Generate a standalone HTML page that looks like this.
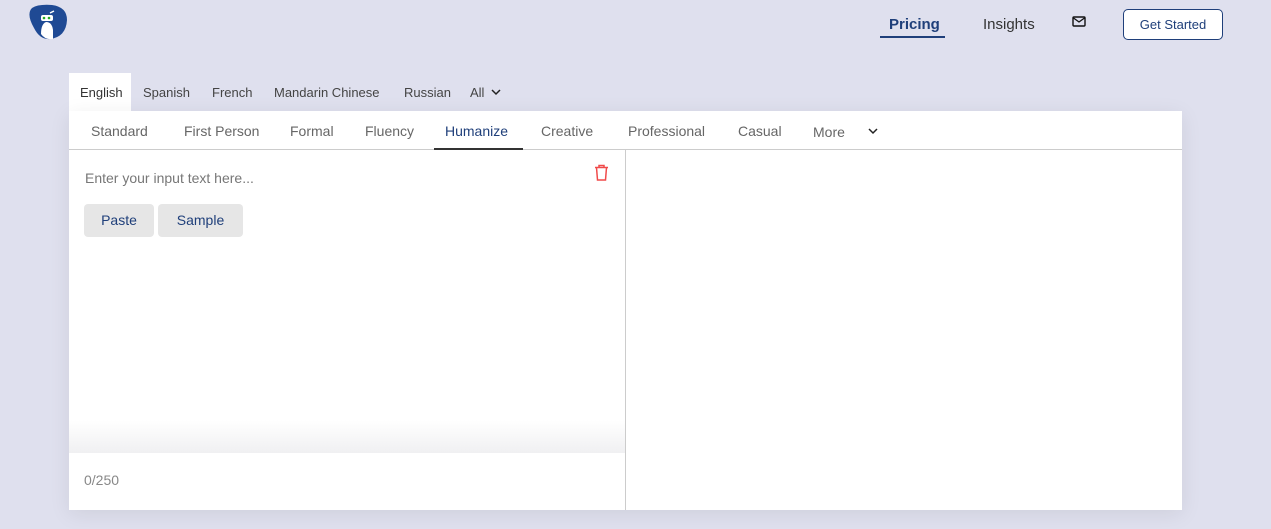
<!DOCTYPE html>
<html><head><style>
*{margin:0;padding:0;box-sizing:border-box}
body{width:1271px;height:529px;background:#dfe0ee;font-family:"Liberation Sans",sans-serif;position:relative;overflow:hidden}
.a{position:absolute;white-space:nowrap}
</style></head><body>
<svg class="a" style="left:28px;top:4px" width="40" height="36" viewBox="0 0 40 36"><path d="M4 4 Q10 0 24 1 Q39 3 39 16 Q38 33 22 35 Q12 36 6 24 Q-2 10 4 4Z" fill="#1f4a94"/><path d="M13 30 Q13 20 18 18 Q24 18 25 26 L25 35 Q17 36 13 30Z" fill="#fff"/><rect x="13" y="11" width="12" height="6" rx="2" fill="#fff"/><circle cx="16" cy="14" r="1.3" fill="#2a2"/><circle cx="21" cy="14" r="1.3" fill="#2a2"/><path d="M22 9 l4 -2" stroke="#fff" stroke-width="1.5"/></svg>
<div class="a" style="left:889px;top:16px;font-size:15px;font-weight:bold;color:#1f3f7a">Pricing</div>
<div class="a" style="left:880px;top:36px;width:65px;height:1.5px;background:#1f3f7a"></div>
<div class="a" style="left:983px;top:16px;font-size:15px;color:#333">Insights</div>
<svg class="a" style="left:1072px;top:16px" width="14" height="11" viewBox="0 0 14 11"><rect x="1" y="1" width="12" height="9" rx="1" fill="none" stroke="#111" stroke-width="1.4"/><path d="M1.5 2 L7 6 L12.5 2" fill="none" stroke="#111" stroke-width="1.3"/></svg>
<div class="a" style="left:1123px;top:9px;width:100px;height:31px;border:1px solid #1f3f7a;border-radius:5px;background:#fff;font-size:13px;color:#1f3f7a;text-align:center;line-height:29px">Get Started</div>
<div class="a" style="left:69px;top:73px;width:62px;height:38px;background:#fff"></div>
<div class="a" style="top:85px;font-size:13px;color:#333;left:80px">English</div>
<div class="a" style="top:85px;font-size:13px;color:#444;left:143px">Spanish</div>
<div class="a" style="top:85px;font-size:13px;color:#444;left:212px">French</div>
<div class="a" style="top:85px;font-size:13px;color:#444;left:274px">Mandarin Chinese</div>
<div class="a" style="top:85px;font-size:13px;color:#444;left:404px">Russian</div>
<div class="a" style="top:85px;font-size:13px;color:#444;left:470px">All</div>
<svg class="a" style="left:491px;top:89px" width="10" height="7"><path d="M1 1 L5 5 L9 1" fill="none" stroke="#222" stroke-width="1.5"/></svg>
<div class="a" style="left:69px;top:111px;width:1113px;height:399px;background:#fff;box-shadow:0 4px 20px rgba(0,0,0,.08)"></div>
<div class="a" style="left:69px;top:149px;width:1113px;height:1px;background:#ccc"></div>
<div class="a" style="top:123px;font-size:14px;color:#666;left:91px">Standard</div>
<div class="a" style="top:123px;font-size:14px;color:#666;left:184px">First Person</div>
<div class="a" style="top:123px;font-size:14px;color:#666;left:290px">Formal</div>
<div class="a" style="top:123px;font-size:14px;color:#666;left:365px">Fluency</div>
<div class="a" style="top:123px;font-size:14px;color:#1f3f7a;left:445px">Humanize</div>
<div class="a" style="left:434px;top:148px;width:89px;height:2px;background:#333"></div>
<div class="a" style="top:123px;font-size:14px;color:#666;left:541px">Creative</div>
<div class="a" style="top:123px;font-size:14px;color:#666;left:628px">Professional</div>
<div class="a" style="top:123px;font-size:14px;color:#666;left:738px">Casual</div>
<div class="a" style="top:124px;font-size:14px;color:#666;left:813px">More</div>
<svg class="a" style="left:868px;top:128px" width="10" height="7"><path d="M1 1 L5 5 L9 1" fill="none" stroke="#222" stroke-width="1.5"/></svg>
<div class="a" style="left:625px;top:150px;width:1px;height:360px;background:#ccc"></div>
<div class="a" style="top:170px;left:85px;font-size:14px;color:#777">Enter your input text here...</div>
<svg class="a" style="left:594px;top:164px" width="15" height="17" viewBox="0 0 15 17"><path d="M1 3.5 H14 M5 3.5 V1.5 H10 V3.5 M2.5 3.5 L3.5 16 H11.5 L12.5 3.5" fill="none" stroke="#f04a4a" stroke-width="1.5"/></svg>
<div class="a" style="left:84px;top:204px;width:70px;height:33px;background:#e6e6e6;border-radius:4px;font-size:14px;color:#1f3f7a;text-align:center;line-height:33px">Paste</div>
<div class="a" style="left:158px;top:204px;width:85px;height:33px;background:#e6e6e6;border-radius:4px;font-size:14px;color:#1f3f7a;text-align:center;line-height:33px">Sample</div>
<div class="a" style="left:69px;top:420px;width:556px;height:33px;background:linear-gradient(#fff,#f0f0f2)"></div>
<div class="a" style="top:472px;left:84px;font-size:14px;color:#888">0/250</div>
</body></html>
